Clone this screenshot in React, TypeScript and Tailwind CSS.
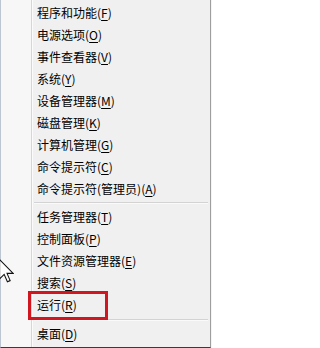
import React from 'react';

type Item = { label: string; key: string };

const groupA: Item[] = [
  { label: '程序和功能', key: 'F' },
  { label: '电源选项', key: 'O' },
  { label: '事件查看器', key: 'V' },
  { label: '系统', key: 'Y' },
  { label: '设备管理器', key: 'M' },
  { label: '磁盘管理', key: 'K' },
  { label: '计算机管理', key: 'G' },
  { label: '命令提示符', key: 'C' },
  { label: '命令提示符(管理员)', key: 'A' },
];

const groupB: Item[] = [
  { label: '任务管理器', key: 'T' },
  { label: '控制面板', key: 'P' },
  { label: '文件资源管理器', key: 'E' },
  { label: '搜索', key: 'S' },
  { label: '运行', key: 'R' },
];

function Row({ item, highlight }: { item: Item; highlight?: boolean }) {
  return (
    <div className="relative h-[22px] flex items-center pl-[4px] text-[12px] leading-none text-black">
      <span>
        {item.label}(<span className="underline underline-offset-[2px] decoration-[1px]">{item.key}</span>)
      </span>
      {/* red annotation box */}
      {highlight && (
        <div className="absolute left-[-5px] top-[-3px] w-[80px] h-[29px] border-[3px] border-[#d0161f]" />
      )}
    </div>
  );
}

function Separator({ h }: { h: string }) {
  return (
    <div className={`${h} flex flex-col justify-center`}>
      <div className="ml-[1px] mr-[2px] h-[1px] bg-[#d3d3d3]" />
      <div className="ml-[1px] mr-[2px] h-[1px] bg-[#fafafa]" />
    </div>
  );
}

function Cursor() {
  return (
    <svg
      className="absolute left-[-2px] top-[259px]"
      width="15"
      height="24"
      viewBox="0 0 12.5 20"
    >
      <path
        d="M0.5 0.5 L0.5 16.5 L4.3 12.8 L7 19 L9.3 18 L6.7 12 L11.8 12 Z"
        fill="#ffffff"
        stroke="#111111"
        strokeWidth="0.9"
        strokeLinejoin="miter"
      />
    </svg>
  );
}

export default function App() {
  return (
    <div
      className="w-[212px] h-[348px] bg-[#f4f4f4] overflow-hidden"
      style={{ fontFamily: '"Noto Sans CJK SC", "Noto Sans", sans-serif' }}
    >
      <div className="relative w-[211px] h-[348px] flex bg-[#f0f0f0] border-l border-[#bcc5d2] border-r border-r-[#9e9e9e] border-b border-b-[#3a3a3a]">
        {/* icon gutter */}
        <div className="w-[31px] shrink-0 bg-[#f7f7f7] border-r border-[#d6d6d6]" />
        <div className="flex-1 pt-[2px] border-l border-[#fbfbfb]">
          {groupA.map((it) => (
            <Row key={it.key} item={it} />
          ))}
          <Separator h="h-[6px]" />
          {groupB.map((it) => (
            <Row key={it.key} item={it} highlight={it.key === 'R'} />
          ))}
          <Separator h="h-[7px]" />
          <Row item={{ label: '桌面', key: 'D' }} />
        </div>
        <Cursor />
      </div>
    </div>
  );
}
